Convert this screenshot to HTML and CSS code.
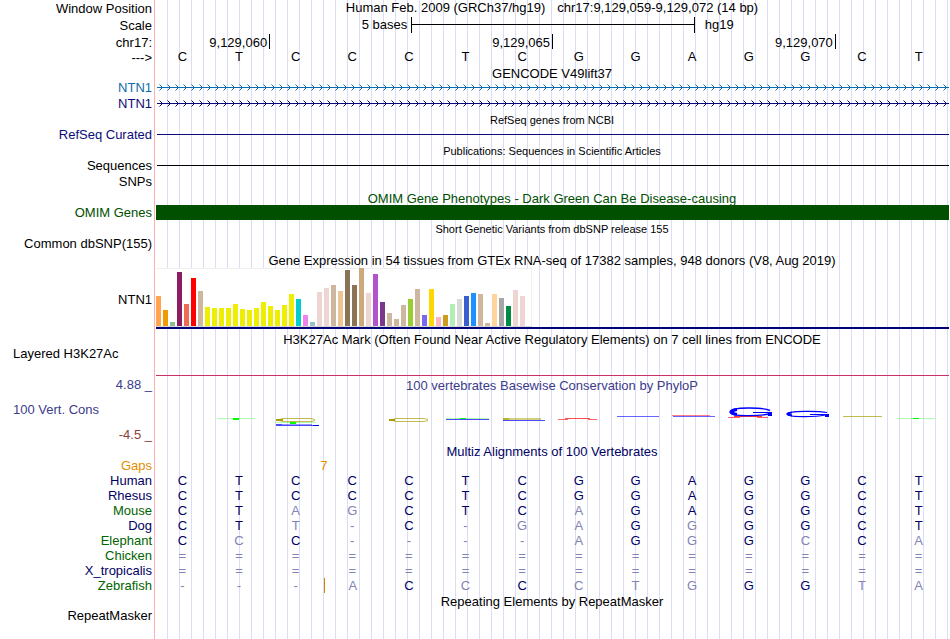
FILE: index.html
```html
<!DOCTYPE html>
<html lang="en">
<head>
    <meta charset="UTF-8">
    <meta name="viewport" content="width=device-width, initial-scale=1.0">
    <title>Human chr17:9,129,059-9,129,072</title>
    <link rel="stylesheet" href="styles.css">
</head>
<body>
    <main class="browser">
        <!-- Position and ruler -->
        <div class="row header-row">
            <div class="label">Window Position</div>
            <h1 class="plot position"><span>Human Feb. 2009 (GRCh37/hg19)</span><span>chr17:9,129,059-9,129,072 (14 bp)</span></h1>
        </div>
        <div class="row header-row scale-row">
            <div class="label">Scale</div>
            <div class="plot scale">
                <span class="scale-size">5 bases</span>
                <span class="scale-bar"></span>
                <span class="scale-db">hg19</span>
            </div>
        </div>
        <div class="row header-row ruler-row">
            <div class="label">chr17:</div>
            <div class="plot ruler">
                <span class="tick">9,129,060</span>
                <span class="tick">9,129,065</span>
                <span class="tick">9,129,070</span>
            </div>
        </div>
        <table class="bases reference">
            <tbody id="referenceBases"></tbody>
        </table>

        <!-- Genes -->
        <h2 class="title">GENCODE V49lift37</h2>
        <div class="row gene-blue">
            <div class="label">NTN1</div>
            <div class="plot">
                <svg class="intron" width="100%" height="15">
                    <defs>
                        <pattern id="arrowsBlue" width="8" height="15" patternUnits="userSpaceOnUse">
                            <path d="M2.5 4.5 L5.5 7.5 L2.5 10.5" fill="none" stroke="#0c6cac"/>
                        </pattern>
                    </defs>
                    <rect width="100%" height="15" fill="url(#arrowsBlue)"/>
                    <rect y="7" width="100%" height="1" fill="#0c6cac"/>
                </svg>
            </div>
        </div>
        <div class="row gene-navy">
            <div class="label">NTN1</div>
            <div class="plot">
                <svg class="intron" width="100%" height="15">
                    <defs>
                        <pattern id="arrowsNavy" width="8" height="15" patternUnits="userSpaceOnUse">
                            <path d="M2.5 4.5 L5.5 7.5 L2.5 10.5" fill="none" stroke="#0c0c78"/>
                        </pattern>
                    </defs>
                    <rect width="100%" height="15" fill="url(#arrowsNavy)"/>
                    <rect y="7" width="100%" height="1" fill="#0c0c78"/>
                </svg>
            </div>
        </div>

        <h2 class="title small">RefSeq genes from NCBI</h2>
        <div class="row gene-navy">
            <div class="label">RefSeq Curated</div>
            <div class="plot"><div class="line"></div></div>
        </div>

        <h2 class="title small">Publications: Sequences in Scientific Articles</h2>
        <div class="row">
            <div class="label">Sequences</div>
            <div class="plot"><div class="line"></div></div>
        </div>
        <div class="row">
            <div class="label">SNPs</div>
            <div class="plot"></div>
        </div>

        <h2 class="title omim">OMIM Gene Phenotypes - Dark Green Can Be Disease-causing</h2>
        <div class="row omim">
            <div class="label">OMIM Genes</div>
            <div class="plot"><div class="block"></div></div>
        </div>

        <h2 class="title small">Short Genetic Variants from dbSNP release 155</h2>
        <div class="row">
            <div class="label">Common dbSNP(155)</div>
            <div class="plot"></div>
        </div>

        <!-- Expression -->
        <h2 class="title">Gene Expression in 54 tissues from GTEx RNA-seq of 17382 samples, 948 donors (V8, Aug 2019)</h2>
        <div class="row gtex-row">
            <div class="label">NTN1</div>
            <div class="plot gtex">
                <div class="bars" id="gtexBars"></div>
            </div>
        </div>

        <h2 class="title">H3K27Ac Mark (Often Found Near Active Regulatory Elements) on 7 cell lines from ENCODE</h2>
        <div class="row mark-row">
            <div class="label left">Layered H3K27Ac</div>
            <div class="plot"><div class="baseline"></div></div>
        </div>

        <!-- Conservation -->
        <div class="row cons-row">
            <div class="label cons-labels">
                <span>4.88 _</span>
                <span class="left">100 Vert. Cons</span>
                <span class="low">-4.5 _</span>
            </div>
            <div class="plot">
                <h2 class="cons-title">100 vertebrates Basewise Conservation by PhyloP</h2>
                <svg class="logo" viewBox="0 0 796 50" width="100%" height="50" preserveAspectRatio="none">
                    <g fill="#00ff00">
                        <rect x="63" y="26" width="38" height="1" opacity="0.3"/>
                        <rect x="79" y="26" width="6" height="2"/>
                        <rect x="121" y="30" width="41" height="1" opacity="0.3"/>
                        <rect x="136" y="30" width="6" height="2"/>
                        <rect x="292" y="26" width="43" height="1" opacity="0.3"/>
                        <rect x="306" y="26" width="6" height="1"/>
                        <rect x="743" y="26" width="38" height="1" opacity="0.3"/>
                        <rect x="759" y="26" width="6" height="1"/>
                    </g>
                    <g fill="none" stroke="#a8a000">
                        <path d="M161 27.5 L157 26.5 H129 L123 28 L129 29.5 H157 L161 28.5" opacity="0.7"/>
                        <path d="M122 28 H129" stroke-width="2"/>
                        <path d="M274 27.5 L270 26.5 H242 L236 28 L242 29.5 H270 L274 28.5" opacity="0.7"/>
                        <path d="M235 28 H241" stroke-width="2"/>
                        <path d="M349 27 H387" stroke-width="2" opacity="0.5"/>
                        <path d="M349 27 H355" stroke-width="2" opacity="0.6"/>
                        <path d="M689 24.5 H728" opacity="0.7"/>
                    </g>
                    <g fill="none" stroke="#0000ff">
                        <path d="M122 33 H128" stroke-width="2" opacity="0.7"/>
                        <path d="M128 32.5 H158" opacity="0.4"/>
                        <path d="M128 33.5 H165" opacity="0.7"/>
                        <path d="M159 33.5 H165"/>
                        <path d="M292 27.5 H335" opacity="0.7"/>
                        <path d="M349 28.5 H391" opacity="0.7"/>
                        <path d="M463 24.5 H505" opacity="0.6"/>
                        <path d="M519 24.5 H561" opacity="0.6"/>
                    </g>
                    <g fill="none" stroke="#ff0000">
                        <path d="M404 27.5 H414 M434 27.5 H443" opacity="0.6"/>
                        <path d="M411 26.5 H436" opacity="0.7"/>
                        <path d="M518 23.5 H556" opacity="0.5"/>
                        <path d="M580 24.5 H608" opacity="0.8"/>
                        <path d="M574 25.5 H586 M603 25.5 H614" opacity="0.6"/>
                    </g>
                    <g fill="none" stroke="#0000ff">
                        <path d="M616 18.5 C610 15.5 577 14.5 576 20 C576 25 606 24 615 22" stroke-width="1.4"/>
                        <path d="M583 17.5 C576 18.5 576 21.5 583 22.5" stroke-width="3"/>
                        <path d="M599 20.5 H618"/>
                        <rect x="614" y="20" width="4" height="4" fill="#0000ff" stroke="none"/>
                        <path d="M673 20.5 C665 19 634 18.5 633 22 C633 25.5 662 25 671 23" stroke-width="1.2"/>
                        <path d="M638 20.5 C632 21.5 632 22.5 638 23.5" stroke-width="2"/>
                        <path d="M656 22.5 H675"/>
                        <rect x="671" y="22" width="4" height="3" fill="#0000ff" stroke="none"/>
                    </g>
                </svg>
            </div>
        </div>

        <!-- Alignments -->
        <h2 class="title multiz">Multiz Alignments of 100 Vertebrates</h2>
        <table class="bases">
            <tbody id="alignment">
                <tr class="gaps">
                    <th scope="row">Gaps</th>
                    <td colspan="2"></td>
                    <td colspan="2">7</td>
                    <td colspan="10"></td>
                </tr>
            </tbody>
        </table>

        <h2 class="title">Repeating Elements by RepeatMasker</h2>
        <div class="row">
            <div class="label">RepeatMasker</div>
            <div class="plot"></div>
        </div>
    </main>

    <script>
        const reference = 'CTCCCTCGGAGGCT';

        // lower case = differs from the human base, drawn faded
        const species = [
            { name: 'Human', group: 'navy', bases: 'CTCCCTCGGAGGCT' },
            { name: 'Rhesus', group: 'navy', bases: 'CTCCCTCGGAGGCT' },
            { name: 'Mouse', group: 'green', bases: 'CTagCTCaGAGGCT' },
            { name: 'Dog', group: 'navy', bases: 'CTt-C-gaGgGGCT' },
            { name: 'Elephant', group: 'green', bases: 'CcC----aGgGcCa' },
            { name: 'Chicken', group: 'green', bases: '==============' },
            { name: 'X_tropicalis', group: 'navy', bases: '==============' },
            { name: 'Zebrafish', group: 'green', bases: '---aCcCctgGGta', insertBefore: 3 }
        ];

        // [height, colour] for each tissue
        const tissues = [
            [30, '#ffa54f'], [16, '#ee9a00'], [4, '#8fbc8f'], [54, '#8b1c62'], [22, '#ee6a50'],
            [48, '#ff0000'], [35, '#cdb79e'], [19, '#eeee00'], [18, '#eeee00'], [18, '#eeee00'],
            [18, '#eeee00'], [22, '#eeee00'], [17, '#eeee00'], [16, '#eeee00'], [18, '#eeee00'],
            [24, '#eeee00'], [20, '#eeee00'], [16, '#eeee00'], [21, '#eeee00'], [32, '#eeee00'],
            [27, '#00cdcd'], [11, '#ee82ee'], [4, '#9ac0cd'], [34, '#eed5d2'], [38, '#eed5d2'],
            [41, '#cdb79e'], [35, '#eec591'], [56, '#8b7355'], [41, '#8b7355'], [58, '#cdaa7d'],
            [33, '#eed5d2'], [52, '#b452cd'], [24, '#7a378b'], [13, '#cdb79e'], [7, '#cdb79e'],
            [21, '#cdb79e'], [27, '#9acd32'], [37, '#cdb79e'], [11, '#7a67ee'], [37, '#ffd700'],
            [9, '#ffb6c1'], [11, '#cd9b1d'], [22, '#b4eeb4'], [27, '#d9d9d9'], [30, '#3a5fcd'],
            [33, '#1e90ff'], [32, '#cdb79e'], [3, '#cdb79e'], [32, '#ffd39b'], [28, '#a6a6a6'],
            [20, '#008b45'], [36, '#eed5d2'], [30, '#eed5d2'], [0, '#ff00ff']
        ];

        function addBaseRow(body, name, bases, rowClass, insertBefore) {
            const row = body.insertRow();
            row.className = rowClass;
            const head = document.createElement('th');
            head.scope = 'row';
            head.textContent = name;
            row.appendChild(head);
            [...bases].forEach((base, i) => {
                const cell = row.insertCell();
                cell.textContent = base.toUpperCase();
                if (base === base.toLowerCase()) cell.classList.add('faded');
                if (i === insertBefore) cell.classList.add('insert');
            });
        }

        addBaseRow(document.getElementById('referenceBases'), '--->', reference, 'black');

        const alignment = document.getElementById('alignment');
        species.forEach(s => addBaseRow(alignment, s.name, s.bases, s.group, s.insertBefore));

        const gtexBars = document.getElementById('gtexBars');
        tissues.forEach(([height, color]) => {
            const bar = document.createElement('span');
            bar.style.height = height + 'px';
            bar.style.background = color;
            gtexBars.appendChild(bar);
        });
    </script>
</body>
</html>
```
FILE: styles.css
```css
body {
    margin: 0;
    background-color: #fff;
    color: #000;
    font-family: "Liberation Sans", Arial, Helvetica, sans-serif;
    font-size: 13px;
    line-height: 15px;
}

/* Red divider and vertical guide lines behind every track */
.browser {
    min-height: 100vh;
    box-sizing: border-box;
    background-image:
        linear-gradient(#ffb0b0, #ffb0b0),
        repeating-linear-gradient(to right, #dcdcf8 0, #dcdcf8 1px, transparent 1px, transparent 12px);
    background-position: 154px 0, 167px 0;
    background-size: 1px 100%, calc(100% - 167px) 100%;
    background-repeat: no-repeat;
}

/* Track rows */
.row {
    display: flex;
    height: 16px;
}

.label {
    flex: 0 0 152px;
    margin-right: 2px;
    text-align: right;
    white-space: nowrap;
}

.left {
    box-sizing: border-box;
    padding-left: 13px;
    text-align: left;
}

.plot {
    flex: 1;
    min-width: 0;
}

.title {
    height: 15px;
    margin: 0 0 0 154px;
    font-size: 13px;
    font-weight: normal;
    line-height: 17px;
    text-align: center;
    white-space: nowrap;
}

.title.small {
    font-size: 11px;
}

/* Header */
.header-row .label {
    line-height: 17px;
}

.position {
    display: flex;
    justify-content: center;
    gap: 12px;
    margin: 0;
    font-size: 13px;
    font-weight: normal;
}

.scale-row {
    height: 18px;
    align-items: center;
}

.scale {
    display: grid;
    grid-template-columns: 9fr 10fr 9fr;
    padding-left: 2px;
    line-height: 16px;
}

.scale-size {
    padding-right: 4px;
    text-align: right;
}

.scale-bar {
    border: solid #000;
    border-width: 0 1px;
    background: linear-gradient(#000, #000) 0 7px / 100% 1px no-repeat;
}

.scale-db {
    padding-left: 10px;
}

.ruler-row {
    height: 15px;
}

.ruler {
    display: grid;
    grid-template-columns: 2fr 5fr 5fr 2fr;
    padding: 0 1px 0 3px;
    line-height: 17px;
}

.tick {
    height: 15px;
    padding-right: 2px;
    border-right: 1px solid #000;
    text-align: right;
}

/* Base tables */
.bases {
    width: calc(100% - 3px);
    table-layout: fixed;
    border-collapse: separate;
    border-spacing: 0;
}

.bases th {
    width: 152px;
    padding: 0 2px 0 0;
    font-weight: normal;
    text-align: right;
}

.bases td {
    height: 15px;
    padding: 0;
    text-align: center;
}

.reference th {
    height: 16px;
    vertical-align: bottom;
}

.reference td {
    vertical-align: top;
}

.navy {
    color: #000064;
}

.green th {
    color: #006400;
}

.green td {
    color: #000064;
}

.bases .faded {
    color: #8282b4;
}

.gaps {
    color: #e68c00;
}

.insert {
    border-left: 1px solid #d28200;
}

/* Genes */
.gene-blue {
    color: #0c6cac;
}

.gene-navy {
    color: #0c0c78;
}

.intron {
    display: block;
    box-sizing: border-box;
    padding: 0 1px 0 3px;
}

.line {
    height: 1px;
    margin: 7px 1px 0 3px;
    background-color: currentColor;
}

.omim {
    color: #005000;
}

.block {
    height: 15px;
    margin: 0 1px 0 2px;
    background-color: #005000;
}

/* GTEx bar chart */
.gtex-row {
    height: 64px;
    align-items: center;
}

.gtex {
    align-self: flex-start;
    margin: 1px 1px 0 2px;
    border-bottom: 2px solid #000078;
}

.bars {
    display: flex;
    align-items: flex-end;
    gap: 2px;
    width: max-content;
    height: 58px;
    border-bottom: 1px solid #d8d8d8;
    background-color: #fff;
    box-shadow: inset 0 1px #f0f0f0, inset -1px 0 #f0f0f0;
}

.bars span {
    width: 5px;
}

/* H3K27Ac */
.mark-row {
    height: 31px;
}

.baseline {
    height: 29px;
    margin: 0 1px 0 2px;
    border-bottom: 1px solid #c83264;
}

/* Conservation */
.cons-row {
    height: 66px;
    color: #3c3c8c;
}

.cons-labels {
    display: flex;
    flex-direction: column;
    justify-content: space-between;
    padding: 0 0 1px;
}

.low {
    color: #8c3c3c;
}

.cons-title {
    height: 15px;
    margin: 0;
    font-size: 13px;
    font-weight: normal;
    line-height: 17px;
    text-align: center;
}

.logo {
    display: block;
}

.multiz {
    color: #000064;
}
```
